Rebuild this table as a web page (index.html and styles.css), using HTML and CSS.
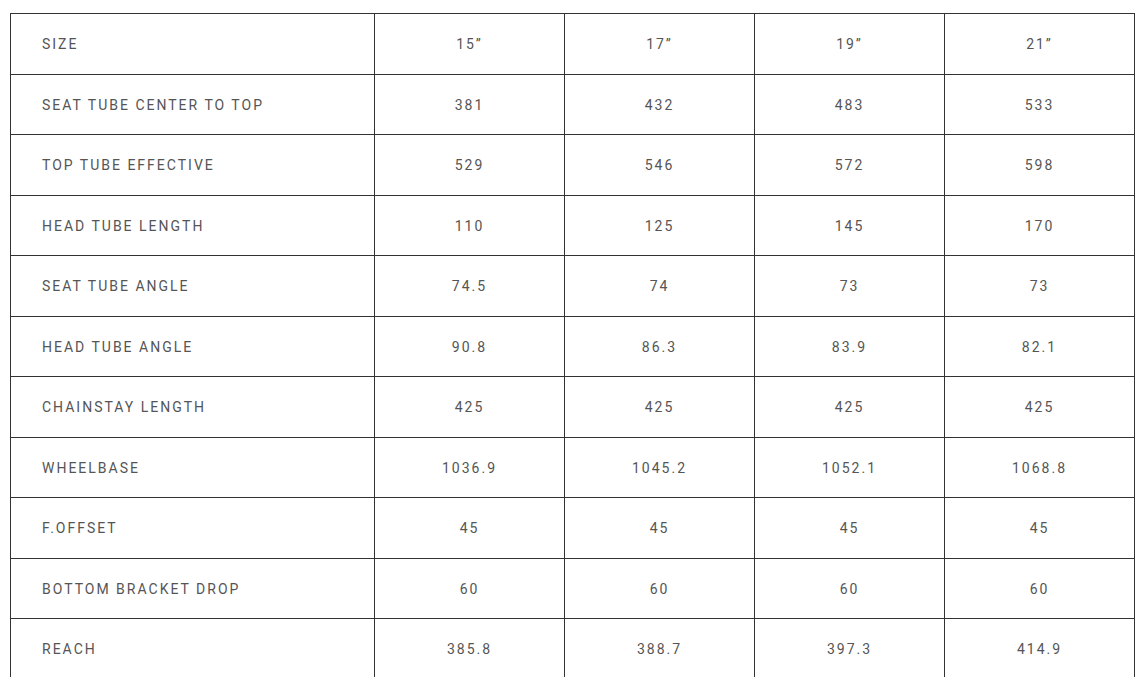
FILE: index.html
```html
<!DOCTYPE html>
<html>
<head>
<meta charset="utf-8">
<link rel="stylesheet" href="styles.css">
</head>
<body>
<table class="geo">
  <colgroup>
    <col class="c-label"><col class="c-val"><col class="c-val"><col class="c-val"><col class="c-val">
  </colgroup>
  <tbody>
    <tr><td>SIZE</td><td>15”</td><td>17”</td><td>19”</td><td>21”</td></tr>
    <tr><td>SEAT TUBE CENTER TO TOP</td><td>381</td><td>432</td><td>483</td><td>533</td></tr>
    <tr><td>TOP TUBE EFFECTIVE</td><td>529</td><td>546</td><td>572</td><td>598</td></tr>
    <tr><td>HEAD TUBE LENGTH</td><td>110</td><td>125</td><td>145</td><td>170</td></tr>
    <tr><td>SEAT TUBE ANGLE</td><td>74.5</td><td>74</td><td>73</td><td>73</td></tr>
    <tr><td>HEAD TUBE ANGLE</td><td>90.8</td><td>86.3</td><td>83.9</td><td>82.1</td></tr>
    <tr><td>CHAINSTAY LENGTH</td><td>425</td><td>425</td><td>425</td><td>425</td></tr>
    <tr><td>WHEELBASE</td><td>1036.9</td><td>1045.2</td><td>1052.1</td><td>1068.8</td></tr>
    <tr><td>F.OFFSET</td><td>45</td><td>45</td><td>45</td><td>45</td></tr>
    <tr><td>BOTTOM BRACKET DROP</td><td>60</td><td>60</td><td>60</td><td>60</td></tr>
    <tr><td>REACH</td><td>385.8</td><td>388.7</td><td>397.3</td><td>414.9</td></tr>
  </tbody>
</table>
</body>
</html>
```
FILE: styles.css
```css
html, body {
  margin: 0;
  background: #fff;
}
body {
  padding: 13px 0 0 10px;
  font-family: Roboto, "Liberation Sans", sans-serif;
  font-size: 14px;
  color: #555;
}
.geo {
  border-collapse: collapse;
  table-layout: fixed;
  width: 1125px;
}
.c-label { width: 364px; }
.c-val { width: 190px; }
.geo td {
  border: 1px solid #333;
  padding: 22px 0 20px;
  line-height: 17.5px;
  letter-spacing: 2px;
  text-align: center;
  white-space: nowrap;
}
.geo td:first-child {
  text-align: left;
  padding-left: 31px;
}
```
